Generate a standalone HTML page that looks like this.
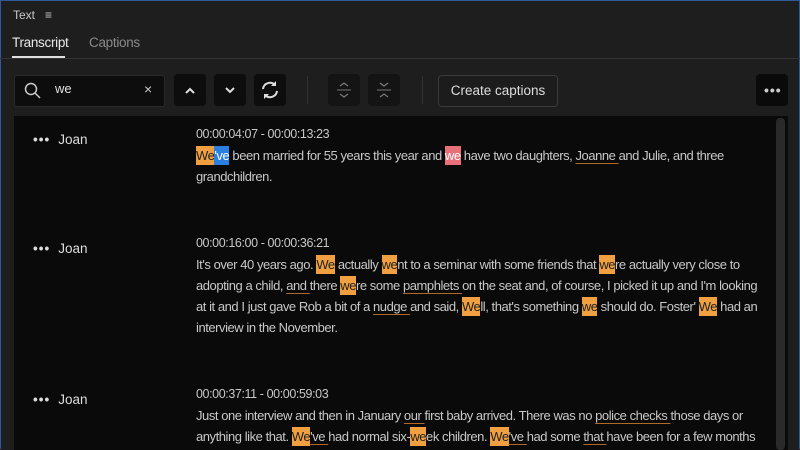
<!DOCTYPE html>
<html><head><style>
body{margin:0;width:800px;height:450px;overflow:hidden;background:#1e1e1e;font-family:"Liberation Sans",sans-serif;color:#d0d0d0;position:relative}
.frame{position:absolute;left:0;top:0;width:798px;height:448px;border:1px solid #2d5a9a;border-bottom:none}
.a{position:absolute}
.btn{position:absolute;top:74px;width:32px;height:32px;background:#0d0d0d;border-radius:4px}
.btn svg{position:absolute;left:0;top:0}
.content{position:absolute;left:14px;top:116px;width:774px;height:334px;background:#0a0a0a}
.ts{position:absolute;left:196px;font-size:12.5px;color:#c8c8c8;letter-spacing:-0.4px}
.ln{position:absolute;left:196px;font-size:13px;color:#c8c8c8;white-space:nowrap;letter-spacing:-0.45px;line-height:21px}
.sp{position:absolute;left:33px;font-size:13.5px;color:#dcdcdc}
.sp b{letter-spacing:1px;margin-right:8px;font-weight:bold}
.h{background:#f0a040;color:#222;padding:2px 0}
.r{background:#e8707a;color:#fff;padding:2px 0}
.bl{background:#2b7fe0;color:#fff;padding:2px 0}
.u{text-decoration:underline;text-decoration-color:#b06a28;text-underline-offset:3px}
</style></head><body>
<div class="frame"></div>
<div class="a" style="left:13px;top:8px;font-size:12px;color:#c8c8c8">Text&nbsp;&nbsp;&nbsp;≡</div>
<div class="a" style="left:12px;top:35px;font-size:13.5px;color:#e8e8e8;letter-spacing:-0.3px">Transcript</div>
<div class="a" style="left:89px;top:35px;font-size:13.5px;color:#8a8a8a;letter-spacing:-0.3px">Captions</div>
<div class="a" style="left:12px;top:56px;width:53px;height:2px;background:#e0e0e0"></div>
<div class="a" style="left:0;top:58px;width:800px;height:1px;background:#333"></div>
<div class="a" style="left:14px;top:75px;width:149px;height:30px;background:#0d0d0d;border-radius:3px;border:1px solid #2a2a2a"></div>
<svg class="a" style="left:24px;top:82px" width="18" height="18"><circle cx="7" cy="7" r="5.5" stroke="#ccc" stroke-width="1.5" fill="none"/><line x1="11" y1="11" x2="16" y2="16" stroke="#ccc" stroke-width="1.5"/></svg>
<div class="a" style="left:55px;top:81px;font-size:13px;color:#e0e0e0">we</div>
<div class="a" style="left:144px;top:81px;font-size:14px;color:#ccc">×</div>
<div class="btn" style="left:174px"><svg width="32" height="32"><path d="M12 19l4-4 4 4" stroke="#ddd" stroke-width="2" fill="none"/></svg></div>
<div class="btn" style="left:214px"><svg width="32" height="32"><path d="M12 14l4 4 4-4" stroke="#ddd" stroke-width="2" fill="none"/></svg></div>
<div class="btn" style="left:254px"><svg width="32" height="32"><path d="M9 15a7 7 0 0 1 12-4M23 17a7 7 0 0 1-12 4" stroke="#ddd" stroke-width="2" fill="none"/><path d="M22 7v5h-5z M10 25v-5h5z" fill="#ddd"/></svg></div>
<div class="a" style="left:307px;top:76px;width:1px;height:28px;background:#333"></div>
<div class="btn" style="left:328px;background:#141414"><svg width="32" height="32"><path d="M12 12l4-3 4 3M12 20l4 3 4-3" stroke="#777" stroke-width="1.3" fill="none"/><line x1="9" y1="16" x2="23" y2="16" stroke="#777"/></svg></div>
<div class="btn" style="left:368px;background:#141414"><svg width="32" height="32"><path d="M12 9l4 3 4-3M12 23l4-3 4 3" stroke="#777" stroke-width="1.3" fill="none"/><line x1="9" y1="16" x2="23" y2="16" stroke="#777"/></svg></div>
<div class="a" style="left:422px;top:76px;width:1px;height:28px;background:#333"></div>
<div class="a" style="left:438px;top:75px;width:118px;height:30px;border:1px solid #3a3a3a;border-radius:4px;background:#1c1c1c;font-size:13.5px;color:#ddd;text-align:center;line-height:30px">Create captions</div>
<div class="btn" style="left:756px;background:#0a0a0a"><div style="position:absolute;left:8px;top:8px;font-size:14px;color:#ccc;font-weight:bold;letter-spacing:1px">•••</div></div>
<div class="content"></div>
<div class="a" style="left:776px;top:118px;width:9px;height:332px;background:#2a2a2a;border-radius:4px"></div>

<div class="sp" style="top:132px"><b>•••</b>Joan</div>
<div class="ts" style="top:127px">00:00:04:07 - 00:00:13:23</div>
<div class="ln" style="top:145px"><span class="h">We</span><span class="bl">'ve</span> been married for 55 years this year and <span class="r">we</span> have two daughters, <span class="u">Joanne </span>and Julie, and three</div>
<div class="ln" style="top:166px">grandchildren.</div>

<div class="sp" style="top:241px"><b>•••</b>Joan</div>
<div class="ts" style="top:236px">00:00:16:00 - 00:00:36:21</div>
<div class="ln" style="top:254px">It's over 40 years ago. <span class="h">We</span> actually <span class="h">we</span>nt to a seminar with some friends that <span class="h">we</span>re actually very close to</div>
<div class="ln" style="top:275px">adopting a child, <span class="u">and </span>there <span class="h">we</span>re some <span class="u">pamphlets </span>on the seat and, of course, I picked it up and I'm looking</div>
<div class="ln" style="top:296px">at it and I just gave Rob a bit of a <span class="u">nudge </span>and said, <span class="h">We</span>ll, that's something <span class="h">we</span> should do. Foster' <span class="h">We</span> had an</div>
<div class="ln" style="top:317px">interview in the November.</div>

<div class="sp" style="top:392px"><b>•••</b>Joan</div>
<div class="ts" style="top:387px">00:00:37:11 - 00:00:59:03</div>
<div class="ln" style="top:405px">Just one interview and then in January <span class="u">our </span>first baby arrived. There was no <span class="u">police checks </span>those days or</div>
<div class="ln" style="top:426px">anything like that. <span class="h">We</span><span class="u">'ve </span>had normal six-<span class="h">we</span>ek children. <span class="h">We</span><span class="u">'ve </span>had some <span class="u">that </span>have been for a few months</div>
</body></html>
